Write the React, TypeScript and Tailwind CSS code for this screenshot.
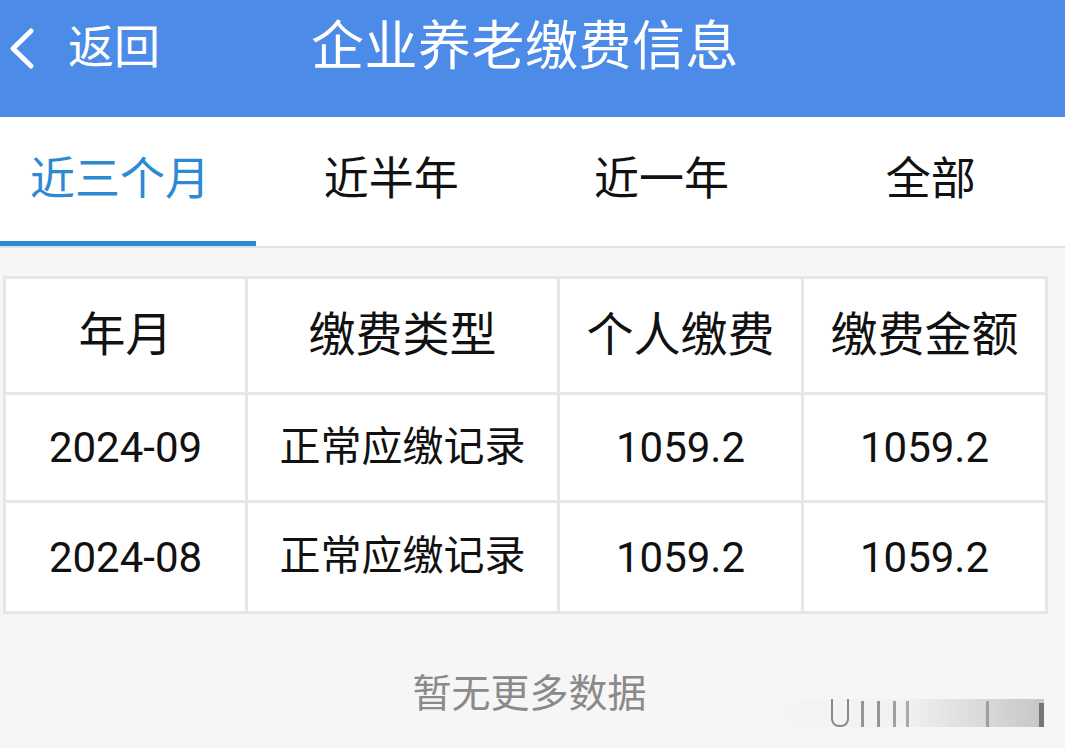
const tabs = ['近三个月', '近半年', '近一年', '全部']

const rows = [
  { month: '2024-09', type: '正常应缴记录', personal: '1059.2', total: '1059.2' },
  { month: '2024-08', type: '正常应缴记录', personal: '1059.2', total: '1059.2' },
]

const tabOffset = ['-ml-[26px]', 'pr-[16px]', 'pr-[8px]', 'pr-[2px]']

const font = { fontFamily: 'Roboto, "Noto Sans CJK SC", sans-serif' }

export default function App() {
  return (
    <div className="relative w-[1065px] h-[748px] overflow-hidden bg-[#f6f6f6]" style={font}>
      {/* header */}
      <div className="h-[117px] bg-[#4c8ce8] text-white">
        <div className="flex items-center h-[94px]">
          <svg width="40" height="94" viewBox="0 0 40 94" className="shrink-0">
            <polyline points="31,31 13,48.5 31,66" fill="none" stroke="white" strokeWidth="5" strokeLinecap="round" strokeLinejoin="round" />
          </svg>
          <span className="ml-[28px] text-[46px] leading-none">返回</span>
          <span className="ml-[151px] text-[53px] leading-none tracking-[0.5px]">企业养老缴费信息</span>
        </div>
      </div>

      {/* tabs */}
      <div className="flex h-[131px] bg-white border-b-[2px] border-[#e3e3e3]">
        {tabs.map((t, i) => (
          <div key={t} className="relative flex-1 flex items-center justify-center pb-[4px]">
            <span
              className={[
                'text-[45px] leading-none',
                i === 0 ? 'text-[#2d89d2]' : 'text-[#111]',
                tabOffset[i],
              ].join(' ')}
            >
              {t}
            </span>
            {i === 0 && <div className="absolute left-0 bottom-0 w-[256px] h-[5px] bg-[#2d89d2]" />}
          </div>
        ))}
      </div>

      {/* table */}
      <div className="pl-[3px] pt-[28px]">
        <div className="w-[1045px] grid grid-cols-[242px_312px_244px_241px] border-[3px] border-[#e6e6e6] bg-white">
          {['年月', '缴费类型', '个人缴费', '缴费金额'].map((h, i) => (
            <div
              key={h}
              className={[
                'h-[116px] flex items-center justify-center text-[47px] text-[#111] border-b-[3px] border-[#e6e6e6]',
                i < 3 ? 'border-r-[3px]' : '',
              ].join(' ')}
            >
              {h}
            </div>
          ))}
          {rows.map((r, ri) =>
            [r.month, r.type, r.personal, r.total].map((c, i) => (
              <div
                key={ri + '-' + i}
                className={[
                  'h-[108px] flex items-center justify-center text-[#111] border-[#e6e6e6]',
                  i === 1 ? 'text-[41px]' : 'text-[42px]',
                  i < 3 ? 'border-r-[3px]' : '',
                  ri === 0 ? 'border-b-[3px]' : '',
                ].join(' ')}
              >
                {c}
              </div>
            ))
          )}
        </div>
      </div>

      <div className="mt-[61px] text-center text-[39px] leading-none text-[#8a8a8a] pr-[6px]">暂无更多数据</div>

      {/* faint watermark smear over the corner */}
      <div className="absolute left-[768px] top-[699px] w-[276px] h-[28px] flex items-end bg-gradient-to-r from-transparent via-[#efefef] to-[#a8a8a8] opacity-60">
        <div className="ml-[63px] w-[18px] h-[28px] border-[2px] border-t-0 border-[#444] rounded-b-[8px]" />
        <div className="ml-[12px] w-[3px] h-[26px] bg-[#555]" />
        <div className="ml-[13px] w-[3px] h-[26px] bg-[#555]" />
        <div className="ml-[13px] w-[3px] h-[26px] bg-[#666]" />
        <div className="ml-[10px] w-[3px] h-[26px] bg-[#777]" />
        <div className="ml-[77px] w-[3px] h-[26px] bg-[#666]" />
        <div className="ml-auto w-[5px] h-[24px] bg-[#222]" />
      </div>
    </div>
  )
}
